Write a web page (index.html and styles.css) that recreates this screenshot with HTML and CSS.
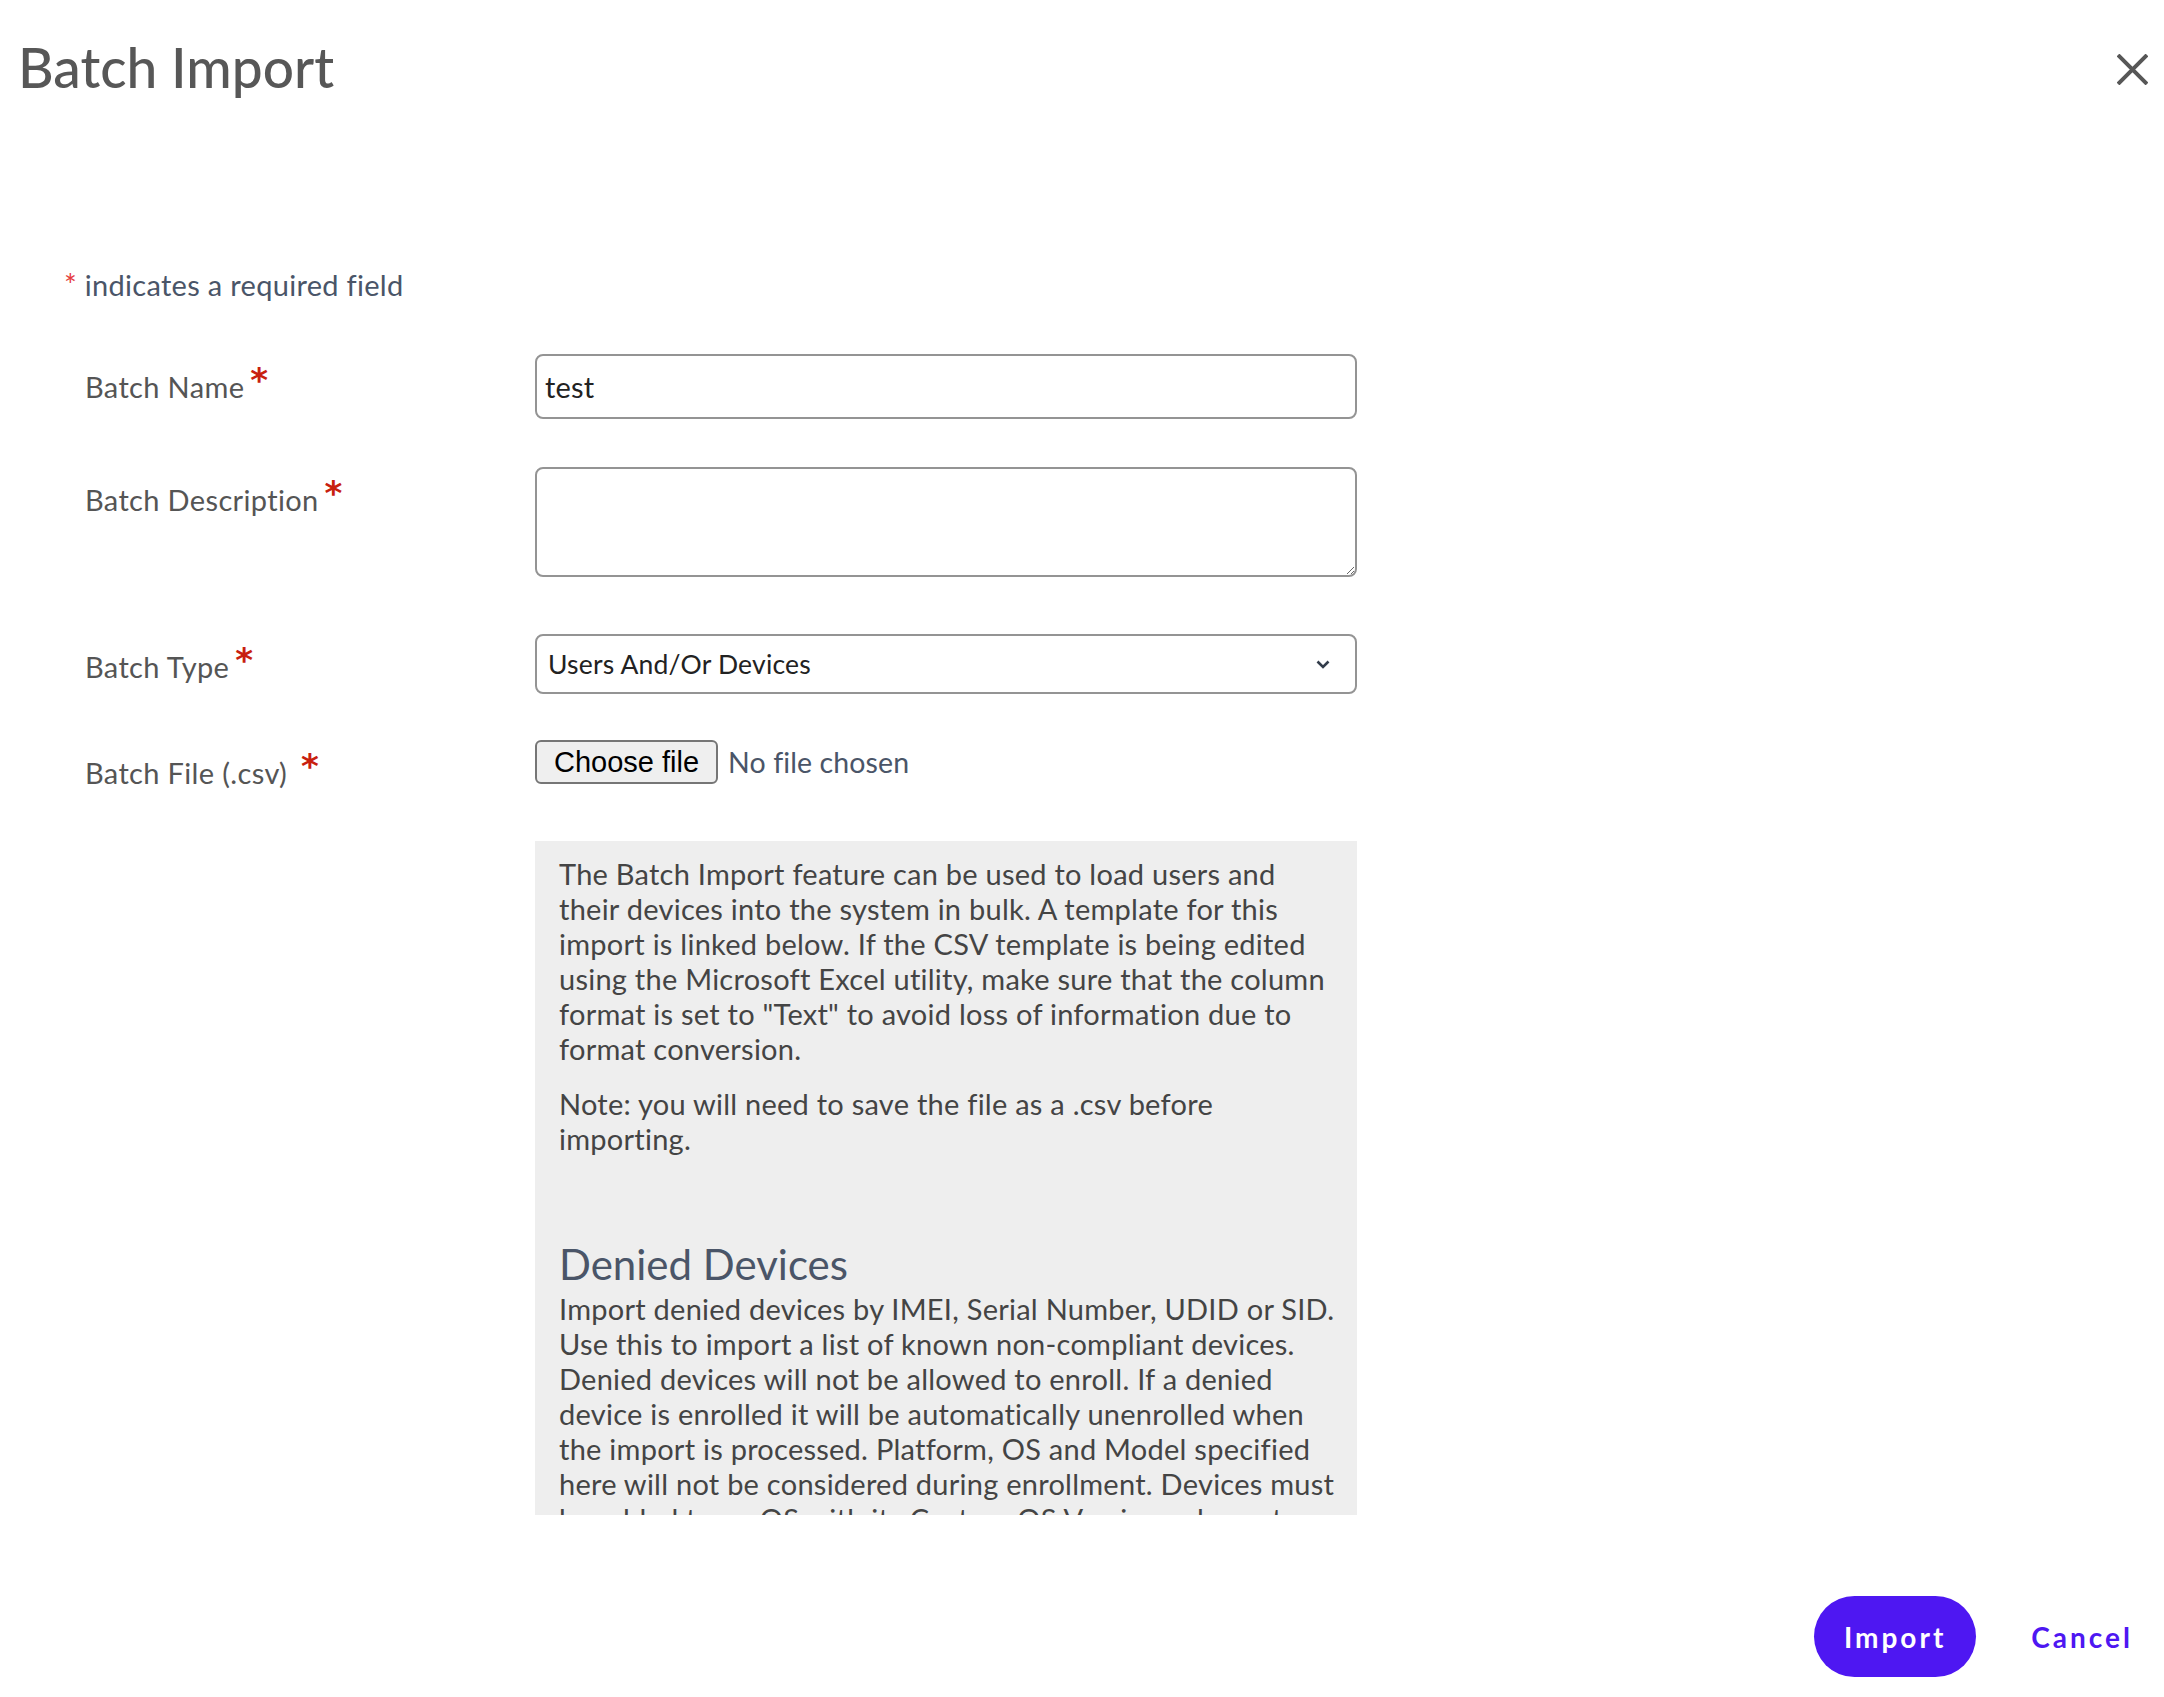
FILE: index.html
```html
<!DOCTYPE html>
<html lang="en">

<head>
    <meta charset="UTF-8">
    <meta name="viewport" content="width=device-width, initial-scale=1.0">
    <title>Batch Import</title>
    <link rel="stylesheet" href="styles.css">
</head>

<body>
    <div class="modal">
        <header class="modal-header">
            <h1>Batch Import</h1>
            <button class="close-btn" aria-label="Close">
                <svg viewBox="0 0 31 31" width="31" height="31">
                    <path d="M1 1L30 30M30 1L1 30" stroke="#575757" stroke-width="4" fill="none" />
                </svg>
            </button>
        </header>

        <div class="modal-body">
            <p class="required-note"><span class="note-star">*</span> indicates a required field</p>

            <div class="form-row">
                <label for="batch-name">Batch Name<span class="star">*</span></label>
                <input id="batch-name" class="text-input" type="text" value="test">
            </div>

            <div class="form-row row-desc">
                <label for="batch-desc">Batch Description<span class="star">*</span></label>
                <textarea id="batch-desc" class="text-input text-area"></textarea>
            </div>

            <div class="form-row row-type">
                <label for="batch-type">Batch Type<span class="star">*</span></label>
                <div class="select-wrap">
                    <select id="batch-type" class="text-input select-input">
                        <option>Users And/Or Devices</option>
                        <option>Denied Devices</option>
                    </select>
                    <svg class="chevron" viewBox="0 0 14 9" width="14" height="9">
                        <path d="M1.5 1.5L7 7l5.5-5.5" stroke="#333d4b" stroke-width="2.6" fill="none" />
                    </svg>
                </div>
            </div>

            <div class="form-row row-file">
                <label>Batch File (.csv) <span class="star">*</span></label>
                <div class="file-field">
                    <label class="file-btn" for="batch-file">Choose file</label>
                    <input id="batch-file" class="file-hidden" type="file" accept=".csv">
                    <span class="file-name">No file chosen</span>
                </div>
            </div>

            <div class="info-box">
                <p>The Batch Import feature can be used to load users and their devices into the system in bulk. A template for this import is linked below. If the CSV template is being edited using the Microsoft Excel utility, make sure that the column format is set to "Text" to avoid loss of information due to format conversion.</p>
                <p>Note: you will need to save the file as a .csv before importing.</p>
                <h2>Denied Devices</h2>
                <p>Import denied devices by IMEI, Serial Number, UDID or SID. Use this to import a list of known non-compliant devices. Denied devices will not be allowed to enroll. If a denied device is enrolled it will be automatically unenrolled when the import is processed. Platform, OS and Model specified here will not be considered during enrollment. Devices must be added to an OS with its Custom OS Version value set.</p>
            </div>
        </div>

        <footer class="modal-footer">
            <button class="import-btn">Import</button>
            <button class="cancel-btn">Cancel</button>
        </footer>
    </div>
</body>

</html>
```

FILE: styles.css
```css
* {
    box-sizing: border-box;
}

body {
    margin: 0;
    font-family: "Lato", "Open Sans", sans-serif;
    color: #555;
    background-color: #fff;
}

.modal-header {
    display: flex;
    justify-content: space-between;
    align-items: center;
    padding: 34px 16px 0 18px;
}

.modal-header h1 {
    margin: 0;
    font-size: 55px;
    font-weight: 500;
    line-height: 67px;
    color: #575757;
}

.close-btn {
    width: 31px;
    height: 31px;
    margin-top: 4px;
    padding: 0;
    border: none;
    background: none;
    cursor: pointer;
}

.close-btn svg {
    display: block;
}

.modal-body {
    padding: 165px 0 0 64px;
}

.required-note {
    margin: 0 0 51px;
    font-size: 29px;
    letter-spacing: 0.3px;
    line-height: 36px;
    color: #4a5568;
}

.note-star {
    color: #e53e3e;
    font-size: 30px;
}

.form-row {
    display: grid;
    grid-template-columns: 450px 822px;
    align-items: start;
    padding-left: 21px;
    margin-bottom: 48px;
}

.form-row > label {
    padding-top: 15px;
    font-size: 29px;
    letter-spacing: 0.35px;
    line-height: 36px;
    color: #555;
}

.star {
    margin-left: 6px;
    font-family: "DejaVu Sans", sans-serif;
    font-size: 34px;
    font-weight: bold;
    line-height: 0;
    color: #c8200e;
    vertical-align: 6px;
}

.row-desc {
    margin-bottom: 57px;
}

.row-type {
    margin-bottom: 46px;
}

.row-file {
    margin-bottom: 50px;
}

.text-input {
    display: block;
    width: 822px;
    height: 65px;
    padding: 0 8px;
    border: 2px solid #949494;
    border-radius: 8px;
    font-family: inherit;
    font-size: 29px;
    letter-spacing: 0.2px;
    color: #222;
    background-color: #fff;
}

.text-area {
    height: 110px;
    padding: 8px;
}

.select-wrap {
    position: relative;
}

.select-input {
    height: 60px;
    padding: 0 50px 0 11px;
    font-size: 26.5px;
    appearance: none;
    -webkit-appearance: none;
}

.chevron {
    position: absolute;
    right: 27px;
    top: 26px;
    pointer-events: none;
}

.file-field {
    display: flex;
    align-items: center;
    gap: 10px;
}

.file-btn {
    display: flex;
    align-items: center;
    height: 44px;
    padding: 0 17px;
    border: 2px solid #767676;
    border-radius: 6px;
    background-color: #efefef;
    font-family: "Liberation Sans", Arial, sans-serif;
    font-size: 29px;
    color: #000;
    cursor: pointer;
}

.file-hidden {
    display: none;
}

.file-name {
    font-size: 28.5px;
    letter-spacing: 0.1px;
    color: #4a5568;
}

.info-box {
    width: 822px;
    height: 674px;
    margin-left: 471px;
    padding: 15px 20px 15px 24px;
    overflow: hidden;
    background-color: #eee;
    font-size: 29px;
    letter-spacing: 0.25px;
    line-height: 35px;
    color: #444;
}

.info-box p {
    margin: 0 0 20px;
}

.info-box h2 {
    margin: 82px 0 0;
    font-size: 42px;
    font-weight: 400;
    letter-spacing: 0;
    line-height: 53px;
    color: #4a5568;
}

.info-box h2 + p {
    margin-top: 0;
}

.modal-footer {
    display: flex;
    justify-content: flex-end;
    align-items: center;
    gap: 35px;
    margin-top: 81px;
    padding-right: 11px;
}

.import-btn,
.cancel-btn {
    height: 81px;
    border: none;
    font-family: inherit;
    font-size: 28px;
    font-weight: 700;
    letter-spacing: 3px;
    cursor: pointer;
}

.import-btn {
    padding: 0 30px;
    border-radius: 41px;
    background-color: #4e17f2;
    color: #fff;
}

.cancel-btn {
    padding: 0 20px;
    background: none;
    color: #4e17f2;
}
```
